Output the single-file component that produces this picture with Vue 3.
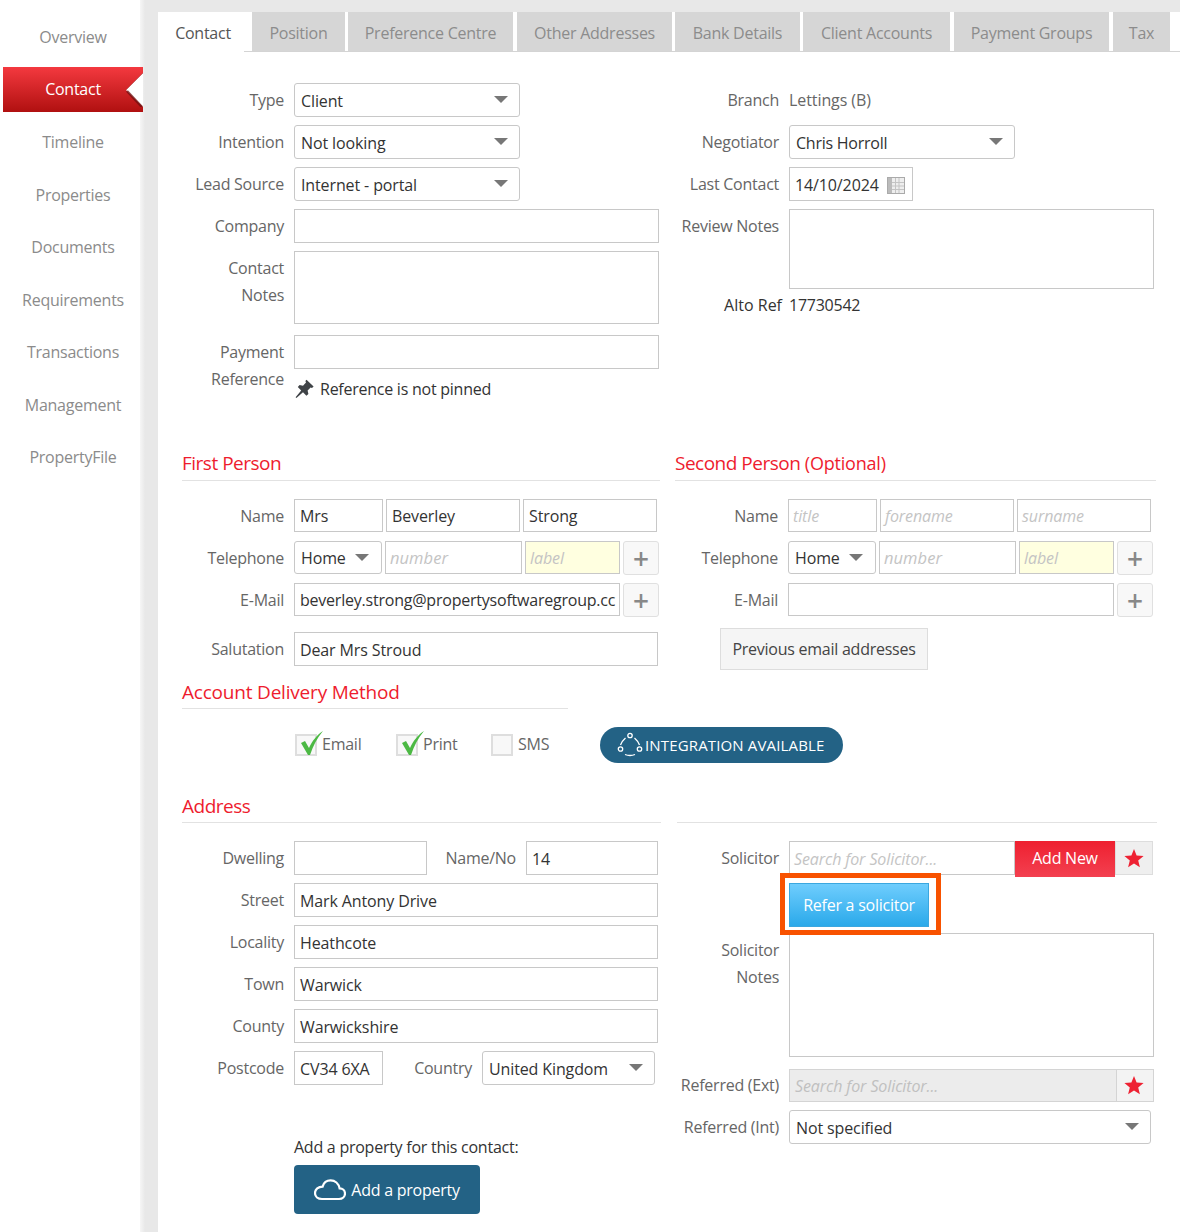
<template>
  <div class="page">
    <nav class="side">
      <a v-for="n in nav" :key="n" class="nav" :class="{ on: n === 'Contact' }">
        {{ n }}
        <svg v-if="n === 'Contact'" class="notch" width="18" height="34" viewBox="0 0 18 34">
          <path d="M18 0 L1 17 L18 34" fill="#fff" />
          <path d="M2 18 L17 34" stroke="#6d1010" stroke-width="2.5" fill="none" opacity=".75" />
          <path d="M1 17 L18 0" stroke="#8a1c1c" stroke-width="1" fill="none" opacity=".4" />
        </svg>
      </a>
    </nav>
    <div class="gutter"></div>
    <main class="main">
      <div class="tabs">
        <span v-for="t in tabs" :key="t.n" class="tab" :class="{ act: t.n === 'Contact' }" :style="{ width: t.w + 'px', marginRight: t.g + 'px' }">{{ t.n }}</span>
      </div>

      <section class="cols top">
        <div>
          <div class="row"><label>Type</label><div class="sel w226">Client<i class="arrow"></i></div></div>
          <div class="row"><label>Intention</label><div class="sel w226">Not looking<i class="arrow"></i></div></div>
          <div class="row"><label>Lead Source</label><div class="sel w226">Internet - portal<i class="arrow"></i></div></div>
          <div class="row"><label>Company</label><div class="fld w365"></div></div>
          <div class="row tall73"><label class="two">Contact Notes</label><div class="fld w365 fill"></div></div>
          <div class="row pay">
            <label class="two">Payment Reference</label>
            <div class="w365">
              <div class="fld bare"></div>
              <div class="pin">
                <svg width="19" height="20" viewBox="0 0 19 20"><path d="M11.5 .8 L18.6 7.6 L17 9 L15.6 8.4 L12.6 11.6 L13.4 15 L11.4 16.8 L8 13.2 L1.4 19 L.6 18.2 L6.2 11.4 L2.8 8 L4.6 6 L8 6.8 L11 3.6 L10.4 2 Z" fill="#3f4347" /></svg>
                <span>Reference is not pinned</span>
              </div>
            </div>
          </div>
        </div>
        <div class="rc">
          <div class="row"><label class="lr">Branch</label><span class="val">Lettings (B)</span></div>
          <div class="row"><label class="lr">Negotiator</label><div class="sel w226 tight">Chris Horroll<i class="arrow"></i></div></div>
          <div class="row"><label class="lr">Last Contact</label>
            <div class="fld date">14/10/2024
              <svg width="18" height="17" viewBox="0 0 18 17"><rect x=".5" y=".5" width="17" height="16" fill="#eee" stroke="#aaa" /><rect x="1" y="1" width="4" height="15" fill="#bbb" /><path d="M5 5.5H17M5 9H17M5 12.5H17M8.5 1V16M12 1V16" stroke="#c4c4c4" /></svg>
            </div>
          </div>
          <div class="row notes80"><label class="lr">Review Notes</label><div class="fld w365 fill"></div></div>
          <div class="alto"><label class="lr alt">Alto Ref</label><span class="val dark">17730542</span></div>
        </div>
      </section>

      <section class="cols people">
        <div>
          <h3 class="head">First Person</h3>
          <div class="row r33"><label>Name</label>
            <div class="fld plain" style="width:89px">Mrs</div><div class="fld plain gap3" style="width:134px">Beverley</div><div class="fld plain gap3" style="width:134px">Strong</div>
          </div>
          <div class="row r33"><label>Telephone</label>
            <div class="sel tel">Home<i class="arrow"></i></div><div class="fld ph num gap3" style="width:137px">number</div><div class="fld ph yel gap3" style="width:95px">label</div><span class="plus">+</span>
          </div>
          <div class="row r33"><label>E-Mail</label>
            <div class="fld plain mail" style="width:326px">beverley.strong@propertysoftwaregroup.cc</div><span class="plus">+</span>
          </div>
          <div class="row sal"><label>Salutation</label><div class="fld plain" style="width:364px">Dear Mrs Stroud</div></div>
        </div>
        <div>
          <h3 class="head">Second Person <small>(Optional)</small></h3>
          <div class="row r33 second"><label>Name</label>
            <div class="fld ph" style="width:89px">title</div><div class="fld ph gap3" style="width:134px">forename</div><div class="fld ph gap3" style="width:134px">surname</div>
          </div>
          <div class="row r33 second"><label>Telephone</label>
            <div class="sel tel">Home<i class="arrow"></i></div><div class="fld ph num gap3" style="width:137px">number</div><div class="fld ph yel gap3" style="width:95px">label</div><span class="plus">+</span>
          </div>
          <div class="row r33 second"><label>E-Mail</label>
            <div class="fld" style="width:326px"></div><span class="plus">+</span>
          </div>
          <button class="prev">Previous email addresses</button>
        </div>
      </section>

      <section class="delivery">
        <h3 class="head short">Account Delivery Method</h3>
        <div class="checks">
          <span class="chk c1"><i class="box"><svg class="tick" width="26" height="26" viewBox="0 0 26 26"><path d="M3 13 L7 11 L11 18 C14 11 19 5 25 1 C19 8 15 16 12 25 L10 25 Z" fill="#4cb944" /></svg></i><b>Email</b></span>
          <span class="chk c2"><i class="box"><svg class="tick" width="26" height="26" viewBox="0 0 26 26"><path d="M3 13 L7 11 L11 18 C14 11 19 5 25 1 C19 8 15 16 12 25 L10 25 Z" fill="#4cb944" /></svg></i><b>Print</b></span>
          <span class="chk c3"><i class="box"></i><b>SMS</b></span>
          <span class="integ">
            <svg width="26" height="26" viewBox="0 0 26 26" fill="none" stroke="#fff" stroke-width="1.3"><circle cx="13" cy="3.5" r="2.2" /><circle cx="3.5" cy="17" r="2.2" /><circle cx="22.5" cy="17" r="2.2" /><path d="M8.5 6 Q5 9 3.5 13M17.5 6 Q21 9 22.5 13M8 22.5 Q13 24.5 18 22.5" /></svg>
            <span class="integ-t">INTEGRATION AVAILABLE</span>
          </span>
        </div>
      </section>

      <section class="cols addr">
        <div>
          <h3 class="head">Address</h3>
          <div class="row"><label>Dwelling</label><div class="fld plain" style="width:133px"></div><span class="mid" style="width:99px">Name/No</span><div class="fld plain" style="width:132px">14</div></div>
          <div class="row"><label>Street</label><div class="fld plain w364">Mark Antony Drive</div></div>
          <div class="row"><label>Locality</label><div class="fld plain w364">Heathcote</div></div>
          <div class="row"><label>Town</label><div class="fld plain w364">Warwick</div></div>
          <div class="row"><label>County</label><div class="fld plain w364">Warwickshire</div></div>
          <div class="row"><label>Postcode</label><div class="fld plain" style="width:89px">CV34 6XA</div><span class="mid" style="width:99px">Country</span><div class="sel" style="width:173px">United Kingdom<i class="arrow"></i></div></div>
          <div class="addprop">
            <p>Add a property for this contact:</p>
            <button class="cloudbtn">
              <svg width="32" height="22" viewBox="0 0 32 22" fill="none" stroke="#fff" stroke-width="2.2"><path d="M8 20 H25 C28.5 20 31 17.6 31 14.6 C31 11.6 28.6 9.4 25.6 9.4 C24.6 4.6 21 1.4 16.6 1.4 C12.6 1.4 9.6 4 8.6 7.6 C4.4 7.6 1 10.4 1 14 C1 17.6 4 20 8 20 Z" /></svg>
              Add a property
            </button>
          </div>
        </div>
        <div class="solic">
          <div class="rule"></div>
          <div class="row"><label class="lr">Solicitor</label>
            <div class="fld ph" style="width:226px">Search for Solicitor...</div><button class="addnew">Add New</button><span class="star"><svg width="20" height="19" viewBox="0 0 20 19"><path d="M10 0 L12.6 6.4 L19.6 6.9 L14.2 11.4 L15.9 18.2 L10 14.5 L4.1 18.2 L5.8 11.4 L.4 6.9 L7.4 6.4 Z" fill="#ee2233" /></svg></span>
          </div>
          <div class="referwrap"><button class="refer">Refer a solicitor</button></div>
          <div class="row nts"><label class="two lr">Solicitor Notes</label><div class="fld fill w365"></div></div>
          <div class="row r33b"><label class="lr">Referred (Ext)</label>
            <div class="extwrap"><span class="ph exttext">Search for Solicitor...</span><span class="star2"><svg width="20" height="19" viewBox="0 0 20 19"><path d="M10 0 L12.6 6.4 L19.6 6.9 L14.2 11.4 L15.9 18.2 L10 14.5 L4.1 18.2 L5.8 11.4 L.4 6.9 L7.4 6.4 Z" fill="#ee2233" /></svg></span></div>
          </div>
          <div class="row"><label class="lr">Referred (Int)</label><div class="sel" style="width:362px">Not specified<i class="arrow"></i></div></div>
        </div>
      </section>
    </main>
  </div>
</template>

<script setup>
const nav = ['Overview', 'Contact', 'Timeline', 'Properties', 'Documents', 'Requirements', 'Transactions', 'Management', 'PropertyFile']
const tabs = [
  { n: 'Contact', w: 86, g: 8 },
  { n: 'Position', w: 93, g: 3 },
  { n: 'Preference Centre', w: 165, g: 4 },
  { n: 'Other Addresses', w: 155, g: 3 },
  { n: 'Bank Details', w: 125, g: 3 },
  { n: 'Client Accounts', w: 147, g: 4 },
  { n: 'Payment Groups', w: 155, g: 4 },
  { n: 'Tax', w: 57, g: 0 }
]
</script>

<style>
html, body { margin: 0; background: #fff; }
</style>

<style scoped>
.page { display: flex; width: 1180px; height: 1232px; overflow: hidden; font-family: "Open Sans", "Noto Sans", sans-serif; font-size: 16px; letter-spacing: -0.25px; color: #333; position: relative; }
.side { width: 140px; flex: none; padding-top: 11px; position: relative; z-index: 2; }
.nav { display: flex; align-items: center; justify-content: center; height: 52.5px; color: #8b8b8b; font-size: 16px; width: 146px; box-sizing: border-box; }
.nav.on { position: relative; height: 45px; margin: 3px 0 4.5px 3px; width: 140px; color: #fff; background: linear-gradient(#f4393f, #b01010); }
.notch { position: absolute; right: 0; top: 6px; }
.gutter { width: 18px; flex: none; background: linear-gradient(90deg, #f6f6f6, #e8e8e8 5px); }
.main { width: 1022px; flex: none; }
.tabs { display: flex; background: linear-gradient(#e8e8e8 12px, #fff 12px); height: 52px; box-sizing: border-box; border-bottom: 1px solid #d4d4d4; }
.tab { height: 39px; margin-top: 12px; padding-top: 3px; background: #d6d6d6; color: #8c8c8c; display: flex; align-items: center; justify-content: center; box-sizing: border-box; flex: none; }
.tab.act { background: #fff; color: #555; height: 40px; padding-left: 4px; padding-top: 2px; align-items: center; }
.cols { display: grid; grid-template-columns: 479px 482px; column-gap: 14px; padding-left: 24px; }
.top { padding-top: 31px; height: 367px; }
.row { display: flex; align-items: center; height: 34px; margin-bottom: 8px; }
label { width: 102px; margin-right: 10px; text-align: right; color: #666; flex: none; }
.lr { width: 104px; }
.sel, .fld { height: 34px; box-sizing: border-box; border: 1px solid #c8c8c8; background: #fff; display: flex; align-items: center; padding: 2px 6px 0; position: relative; flex: none; white-space: nowrap; letter-spacing: -0.12px; }
.sel { border-radius: 3px; color: #333; }
.tight { letter-spacing: -0.25px; }
.arrow { position: absolute; right: 11px; top: 50%; margin-top: -4px; border-left: 7px solid transparent; border-right: 7px solid transparent; border-top: 7px solid #777; }
.w226 { width: 226px; }
.w365 { width: 365px; }
.w364 { width: 364px; }
.tall73 { height: 73px; margin-bottom: 11px; }
.two { align-self: flex-start; line-height: 27px; padding-top: 4px; box-sizing: border-box; }
.fill { height: 100%; }
.pay { align-items: flex-start; height: auto; }
.bare { width: 365px; }
.pin { display: flex; align-items: center; gap: 6px; height: 20px; margin-top: 10px; color: #333; padding-left: 1px; }
.val { color: #666; letter-spacing: -0.08px; }
.val.dark { color: #333; letter-spacing: -0.25px; }
.date { width: 124px; padding: 2px 5px 0; gap: 8px; }
.notes80 { height: 80px; margin-bottom: 0; }
.notes80 label { align-self: flex-start; padding-top: 4px; }
.alto { display: flex; height: 34px; align-items: center; margin-top: -1px; }
.alt { color: #333; width: 107px; margin-right: 7px; letter-spacing: 0; }
.people { height: 229px; }
.head { margin: 0; height: 29px; font-weight: 400; font-size: 19px; letter-spacing: -0.5px; color: #ee1c2e; border-bottom: 1px solid #e2e2e2; line-height: 26px; }
.head small { font-size: 18px; letter-spacing: -0.2px; }
.people .head { height: 30px; margin-bottom: 18px; margin-right: 1px; }
.r33 { height: 33px; margin-bottom: 9px; }
.r33 label { padding-top: 1px; box-sizing: border-box; }
.r33 .fld, .r33 .sel { height: 33px; padding-top: 0; }
.gap3 { margin-left: 3px; }
.plain { padding: 2px 5px 0; }
.mail { letter-spacing: -0.22px; }
.ph { color: #c4c4c4; font-style: italic; padding: 2px 4px 0; letter-spacing: -0.1px; }
.num { font-size: 16.5px; letter-spacing: 0.05px; }
.yel { background: #ffffe0; }
.tel { width: 88px; padding: 0 6px; }
.tel .arrow { right: 12px; }
.plus { width: 36px; height: 34px; box-sizing: border-box; margin-left: 3px; border: 1px solid #e0e0e0; border-radius: 3px; background: #f8f8f8; display: flex; align-items: center; justify-content: center; color: #888; font-size: 28px; font-weight: 600; line-height: 1; flex: none; }
.sal { margin-top: 16px; margin-bottom: 0; }
.second label { width: 103px; margin-right: 10px; }
.prev { margin-left: 45px; margin-top: 3px; height: 42px; width: 208px; background: #f5f5f5; border: 1px solid #ddd; font: inherit; letter-spacing: inherit; color: #444; padding: 0; }
.delivery { padding-left: 24px; height: 114px; }
.short { width: 386px; letter-spacing: -0.2px; }
.checks { display: flex; align-items: center; height: 36px; margin-top: 18px; padding-left: 113px; color: #666; position: relative; }
.chk { display: flex; align-items: center; gap: 5px; height: 24px; flex: none; }
.chk b { font-weight: 400; margin-top: -2px; }
.c1 { width: 101px; }
.c2 { width: 95px; }
.c3 { width: 109px; }
.box { width: 22px; height: 22px; box-sizing: border-box; border: 2px solid #dedede; background: #f8f8f8; display: block; position: relative; flex: none; }
.tick { position: absolute; left: 1px; top: -6px; }
.integ { width: 243px; height: 36px; border-radius: 18px; background: #236285; color: #fff; display: flex; align-items: center; font-size: 15px; letter-spacing: 0.15px; padding-left: 17px; box-sizing: border-box; gap: 2px; flex: none; white-space: nowrap; }
.integ-t { padding-top: 0; }
.addr .head { margin-bottom: 18px; }
.solic { padding-top: 48px; position: relative; }
.rule { position: absolute; left: 2px; right: 0; top: 29px; border-top: 1px solid #e2e2e2; height: 0; }
.addnew { width: 100px; height: 36px; align-self: flex-start; border: 0; background: linear-gradient(#ee2030, #f34050); color: #fff; font: inherit; letter-spacing: inherit; padding: 0 0 3px; flex: none; }
.star { width: 38px; height: 34px; box-sizing: border-box; border: 1px solid #ddd; background: #efefef; display: flex; align-items: center; justify-content: center; flex: none; }
.referwrap { padding-left: 114px; height: 44px; margin-bottom: 6px; }
.refer { position: relative; z-index: 3; width: 140px; height: 44px; border: 1px solid #3ba7df; background: linear-gradient(#6fcdfd, #2aa9ea); color: #fff; font: inherit; letter-spacing: inherit; padding: 0; }
.refer::after { content: ""; position: absolute; inset: -11px -13px -9px -10px; border: 5px solid #f85200; }
.nts { height: 124px; margin-bottom: 12px; }
.r33b { height: 33px; }
.extwrap { width: 365px; height: 33px; box-sizing: border-box; border: 1px solid #d4d4d4; background: #ececec; display: flex; align-items: center; position: relative; flex: none; }
.exttext { padding: 0 5px; flex: 1; color: #c0c0c0; background: transparent; }
.star2 { width: 37px; height: 31px; box-sizing: border-box; padding-right: 2px; border-left: 1px solid #d4d4d4; display: flex; align-items: center; justify-content: center; background: #f3f3f3; flex: none; }
.mid { text-align: right; color: #666; padding-right: 10px; box-sizing: border-box; flex: none; }
.addprop { padding-left: 112px; margin-top: 51px; }
.addprop p { margin: 0; line-height: 22px; }
.cloudbtn { margin-top: 7px; width: 186px; height: 49px; background: #236285; color: #fff; border: 0; border-radius: 4px; font: inherit; letter-spacing: inherit; display: flex; align-items: center; justify-content: center; gap: 5px; padding: 0; }
.top label, .addr label, .people label { line-height: 27px; }
</style>
